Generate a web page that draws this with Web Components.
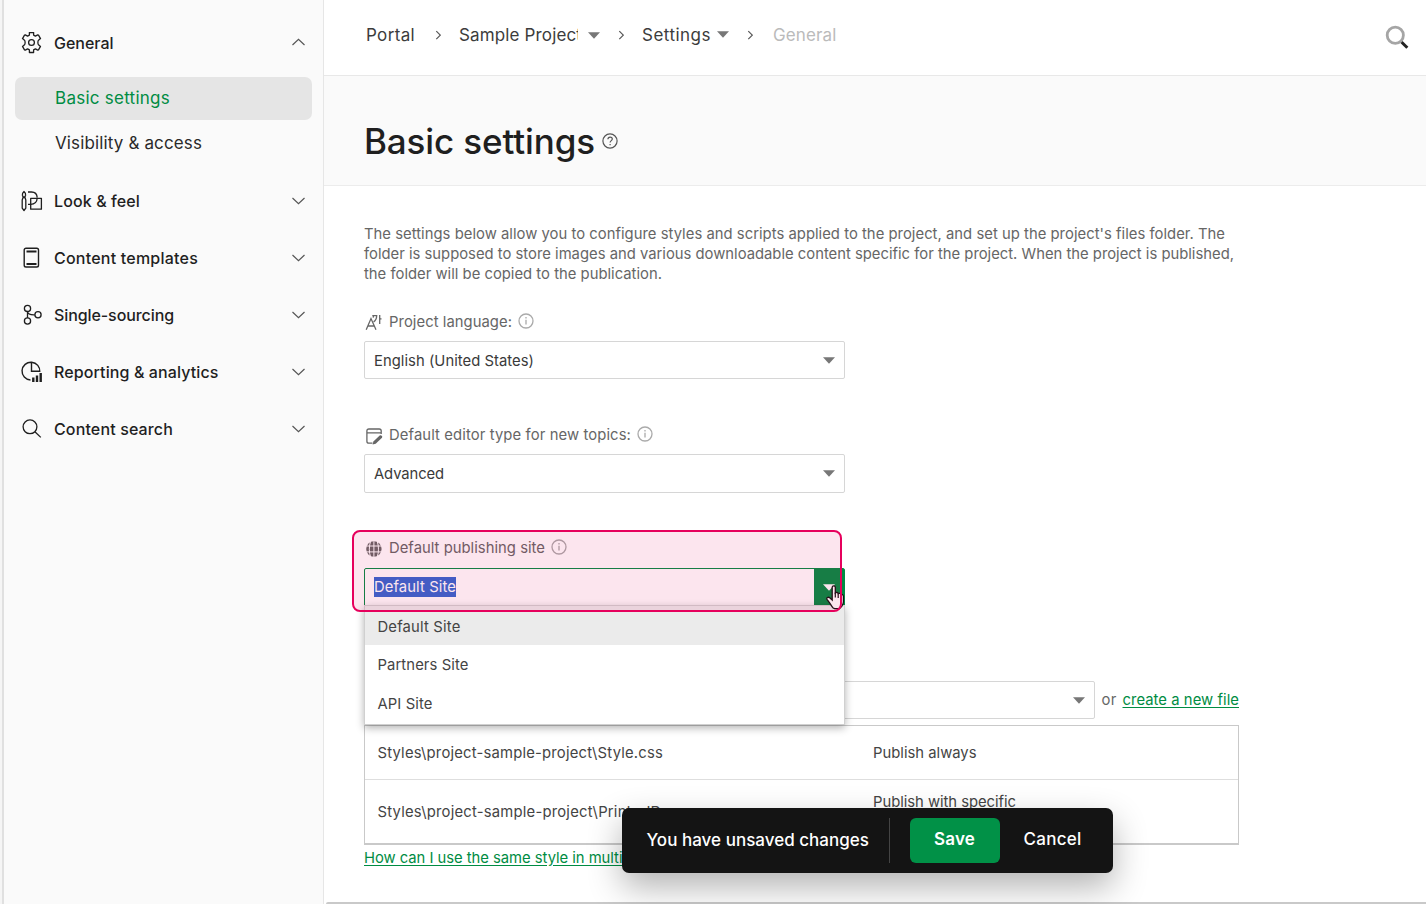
<!DOCTYPE html>
<html lang="en">
<head>
<meta charset="utf-8">
<title>Basic settings</title>
<style>
  body {
    margin: 0;
    background: #fff;
    font-family: Inter, Roboto, "Liberation Sans", sans-serif;
    overflow: hidden;
  }
</style>
</head>
<body>
<settings-page></settings-page>

<script>
// Outline icons, all drawn in currentColor
const ICONS = {
  gear: `<svg width="22" height="22" viewBox="0.5 0.5 22 22" fill="none" stroke="currentColor" stroke-width="1.3" stroke-linejoin="round"><path d="M8.900 1h4.200v2.600l1.800 1 2.300-1.200 .8.200 2 3.500-2 1.700c-.8.600-.8 3.800 0 4.400l2 1.700-2 3.500-.8.200-2.300-1.200-1.800 1V21H8.900v-2.600l-1.800-1-2.300 1.200-.8-.2-2-3.500 2-1.700c.8-.6.8-3.800 0-4.400L2 7.100l2-3.500 .8-.2 2.300 1.200 1.800-1z"/><circle cx="11" cy="11" r="2.900"/></svg>`,
  look: `<svg width="22" height="22" viewBox="0 0 22 22" fill="none" stroke="currentColor" stroke-width="1.3" stroke-linejoin="round"><path d="M3 1.500c1.300 1 1.800 2.300 1.600 3.700L4 6.800H2L1.400 5.200C1.200 3.800 1.700 2.500 3 1.500zM2 7.500h2l.8 2.500v8.200L3 20.500 1.200 18.200V10z"/><path d="M7 2h3.500c3.200 0 5.500 2.300 5.700 5.600M7 14.300h2.600c3.500 0 6.300-2 6.600-6"/><path d="M9.700 8.300h10.700v10.900H9.700z"/></svg>`,
  template: `<svg width="22" height="22" viewBox="0 0 22 22" fill="none" stroke="currentColor"><rect x="3.200" y="1.200" width="14.300" height="18.800" rx="1.800" stroke-width="1.4"/><path d="M5.500 4.500h10M5.500 17h10" stroke-width="2.2"/></svg>`,
  nodes: `<svg width="22" height="22" viewBox="0 0 22 22" fill="none" stroke="currentColor" stroke-width="1.3"><circle cx="6.500" cy="4.400" r="3.100"/><circle cx="6.500" cy="17" r="3.100"/><circle cx="17" cy="10.800" r="3.100"/><path d="M6.500 7.500v6.400M6.500 7.500c.2 2.400 1.800 3.500 7.300 3.300"/></svg>`,
  report: `<svg width="22" height="22" viewBox="0 0 22 22" fill="none" stroke="currentColor"><path d="M9.500 19A8.900 8.900 0 1 1 18.800 11M10.500 1.200v9h8.700" stroke-width="1.4"/><path d="M12.300 21v-4.500M16 21v-6.500M19.700 21V12" stroke-width="2.4"/></svg>`,
  search: `<svg width="22" height="22" viewBox="0 0 22 22" fill="none" stroke="currentColor" stroke-width="1.3"><circle cx="9" cy="8.800" r="6.900"/><path d="M13.900 13.700l5.900 5.700"/></svg>`,
  chevron: `<svg width="14" height="8" viewBox="0 0 14 8" fill="none" stroke="#555" stroke-width="1.2"><path d="M1.500 1l6 5.700 6-5.700"/></svg>`,
  crumb: `<svg width="6" height="10" viewBox="0 0 6 10" fill="none" stroke="#555" stroke-width="1.2"><path d="M1.300 1.200l4 4-4 4"/></svg>`,
  caret: `<svg width="12" height="7" viewBox="0 0 12 7" fill="currentColor"><path d="M0 .3h12L6 6.700z"/></svg>`,
  info: `<svg width="16" height="16" viewBox="0 0 16 16" fill="none" stroke="#aaa" stroke-width="1.3"><circle cx="8" cy="8" r="7"/><path d="M8 6.800v4.700M8 4.100v1.400"/></svg>`,
  help: `<svg width="16" height="16" viewBox="0 0 16 16" fill="none" stroke="#555" stroke-width="1.2"><circle cx="8" cy="8" r="7.100"/><path d="M5.900 6.200c.1-1.400 1-2.100 2.200-2.100 1.300 0 2.200.8 2.200 1.900 0 1.600-2.200 1.700-2.200 3.600M8.100 11v1.300"/></svg>`,
  language: `<svg width="18" height="18" viewBox="0 0 18 18" fill="none" stroke="currentColor" stroke-width="1.3"><path d="M1.200 15.700L6 4.500l5 11.200M2.900 12h6.300M7.300 1.600h4.400c0 3-1 5-3.100 6.300M14.700 1v9M14.700 4.800h1.800M8.500 1.600l-.3 2"/></svg>`,
  editor: `<svg width="18" height="18" viewBox="0 0 18 18" fill="none" stroke="currentColor" stroke-width="1.3"><path d="M7.500 16.200H3.900c-1.300 0-2-.7-2-2V4c0-1.300.7-2 2-2h10.300c1.300 0 2 .7 2 2v3M1.900 5.800h14.300"/><path d="M7.600 17.600l.8-3.200 6.300-5.900c1.200-.9 3.300.9 2.300 2.200l-6.300 6z" fill="currentColor" stroke="none"/></svg>`,
  globe: `<svg width="18" height="18" viewBox="0 0 18 18"><circle cx="8.900" cy="9" r="7.700" fill="currentColor"/><path d="M1 6h16M1 11.900h16M8.900 1.200v16M5.600 1.200c-1.700 5-1.700 11 0 16M12.200 1.200c1.700 5 1.700 11 0 16" fill="none" stroke="#fff" stroke-width="1"/></svg>`,
  hand: `<svg width="20" height="25" viewBox="0 0 20 25"><path d="M7.200 2.200c0-1.900 3.100-1.900 3.100 0v5.700c.9-.8 2.600-.5 2.900.7 1-.6 2.500-.2 2.800.9 1.200-.3 2.400.4 2.400 1.800v5.500c0 1.800-.8 3-1.500 4.200l-1.600 1.900c-1.200 1-5.600 1.100-7.100 0-1.500-1.200-2.300-3.200-3.600-5.100l-2.600-3.500c-.9-1.500 1.200-2.800 2.700-1.500l2.500 2.200z" fill="#fff" stroke="#111" stroke-width="1.3"/><path d="M10.300 7.500v5M13.200 9v4M16 10v3.500" stroke="#111" stroke-width="1.2"/></svg>`,
  magnifier: `<svg width="26" height="26" viewBox="0 0 26 26" fill="none"><path d="M17 17.500l6.300 6.300" stroke="#222" stroke-width="3"/><circle cx="11.300" cy="11.300" r="8.100" stroke="#a5a5a5" stroke-width="2.8"/></svg>`,
};

// Base class: attaches the shadow root and renders once
class BaseElement extends HTMLElement {
  constructor() {
    super();
    this.attachShadow({ mode: 'open' });
  }

  connectedCallback() {
    this.shadowRoot.innerHTML = `<style>${this.styles()}</style>${this.markup()}`;
  }
}

class UiIcon extends BaseElement {
  styles() {
    return `
      :host { display: inline-flex; flex: none; }
      svg { display: block; }
    `;
  }

  markup() {
    return ICONS[this.getAttribute('name')];
  }
}

// A single line of text, tracked so that it fills the given measure
class TextRun extends BaseElement {
  styles() {
    return `
      :host { display: inline-block; white-space: pre; flex: none; }
    `;
  }

  markup() {
    return '<span><slot></slot></span>';
  }

  connectedCallback() {
    super.connectedCallback();
    const measure = parseFloat(this.getAttribute('measure'));
    const span = this.shadowRoot.querySelector('span');
    const natural = span.getBoundingClientRect().width;
    if (!measure || !natural) return;
    this.style.letterSpacing = `${(measure - natural) / this.textContent.length}px`;
    this.style.width = `${measure}px`;
  }
}

class NavGroup extends BaseElement {
  styles() {
    return `
      :host { display: block; }
      .row {
        display: flex;
        align-items: center;
        height: 57px;
        padding: 0 18px 0 17px;
        gap: 11px;
        font-size: 16px;
        font-weight: 500;
        color: #1f1f1f;
      }
      .label { flex: 1; padding-top: 1px; }
      .items { display: flex; flex-direction: column; gap: 2px; padding: 6px 11px 7px; }
      :host(:not([open])) .items { display: none; }
      :host([open]) .chevron { transform: translateY(-1px) scaleY(-1); }
    `;
  }

  markup() {
    return `
      <div class="row">
        <ui-icon name="${this.getAttribute('icon')}"></ui-icon>
        <div class="label"><text-run measure="${this.getAttribute('measure')}">${this.getAttribute('label')}</text-run></div>
        <ui-icon class="chevron" name="chevron"></ui-icon>
      </div>
      <div class="items"><slot></slot></div>
    `;
  }
}

class NavItem extends BaseElement {
  styles() {
    return `
      :host {
        display: flex;
        align-items: center;
        box-sizing: border-box;
        height: 43px;
        padding: 0 0 2px 40px;
        border-radius: 7px;
        font-size: 17px;
        color: #2a2a2a;
      }
      :host([active]) { background: #e5e5e5; color: #008c43; }
    `;
  }

  markup() {
    return '<slot></slot>';
  }
}

class SideNav extends BaseElement {
  styles() {
    return `
      :host {
        display: block;
        box-sizing: border-box;
        width: 324px;
        padding-top: 14px;
        background: #fafafa;
        border-right: 1px solid #e6e6e6;
        border-left: 2px solid #f5f5f5;
        box-shadow: inset 2px 0 #e0e0e0;
        flex: none;
      }
      .groups { padding-left: 2px; }
    `;
  }

  markup() {
    return `
      <div class="groups">
        <nav-group open icon="gear" label="General" measure="59.5">
          <nav-item active><text-run measure="115">Basic settings</text-run></nav-item>
          <nav-item><text-run measure="147">Visibility &amp; access</text-run></nav-item>
        </nav-group>
        <nav-group icon="look" label="Look &amp;amp; feel" measure="86"></nav-group>
        <nav-group icon="template" label="Content templates" measure="144"></nav-group>
        <nav-group icon="nodes" label="Single-sourcing" measure="120"></nav-group>
        <nav-group icon="report" label="Reporting &amp;amp; analytics" measure="164.5"></nav-group>
        <nav-group icon="search" label="Content search" measure="119"></nav-group>
      </div>
    `;
  }
}

class TopBar extends BaseElement {
  styles() {
    return `
      :host {
        display: flex;
        justify-content: space-between;
        box-sizing: border-box;
        height: 76px;
        padding: 0 16px 0 42px;
        border-bottom: 1px solid #e8e8e8;
      }
      .crumbs {
        display: flex;
        align-items: center;
        height: 69px;
        font-size: 17px;
        color: #3c3c3c;
      }
      .crumbs > * { flex: none; }
      .sep { padding: 1px 18px 0 20px; }
      .project { width: 119px; overflow: hidden; }
      .caret { color: #777; margin-left: 6px; }
      .project + .caret { margin-left: 10px; margin-top: 1px; }
      .caret + .sep { padding-left: 18px; }
      .current { color: #bbb; margin-left: 2px; }
      .search { align-self: flex-start; padding-top: 24px; }
    `;
  }

  markup() {
    return `
      <div class="crumbs">
        <text-run measure="49">Portal</text-run>
        <ui-icon class="sep" name="crumb"></ui-icon>
        <div class="project"><text-run measure="123">Sample Project</text-run></div>
        <ui-icon class="caret" name="caret"></ui-icon>
        <ui-icon class="sep" name="crumb"></ui-icon>
        <text-run measure="69">Settings</text-run>
        <ui-icon class="caret" name="caret"></ui-icon>
        <ui-icon class="sep" name="crumb"></ui-icon>
        <text-run class="current" measure="63.5">General</text-run>
      </div>
      <ui-icon class="search" name="magnifier"></ui-icon>
    `;
  }
}

class PageTitle extends BaseElement {
  styles() {
    return `
      :host {
        display: flex;
        align-items: center;
        box-sizing: border-box;
        height: 110px;
        padding: 0 0 0 40px;
        gap: 7px;
        background: #fafafa;
        border-bottom: 1px solid #ececec;
      }
      h1 { margin: 20px 0 0; font-size: 35px; line-height: 44px; font-weight: 500; color: #1f1f1f; }
      ui-icon { margin-top: 20px; }
    `;
  }

  markup() {
    return `
      <h1><text-run measure="231">Basic settings</text-run></h1>
      <ui-icon name="help"></ui-icon>
    `;
  }
}

class FieldLabel extends BaseElement {
  styles() {
    return `
      :host {
        display: flex;
        align-items: center;
        height: 20px;
        gap: 6px;
        padding-left: 1px;
        font-size: 14.8px;
        color: #666;
      }
      .icon { margin-top: 1px; }
      .info { margin-left: -0.5px; margin-top: -2px; }
    `;
  }

  markup() {
    return `
      <ui-icon class="icon" name="${this.getAttribute('icon')}"></ui-icon>
      <slot></slot>
      <ui-icon class="info" name="info"></ui-icon>
    `;
  }
}

class SelectBox extends BaseElement {
  styles() {
    return `
      :host {
        display: flex;
        align-items: stretch;
        box-sizing: border-box;
        width: 481px;
        height: 38px;
        border: 1px solid #d6d6d6;
        border-radius: 2px;
        background: #fff;
        font-size: 14.8px;
        color: #3a3a3a;
      }
      .value { flex: 1; display: flex; align-items: center; padding-left: 9px; padding-top: var(--value-shift, 1px); }
      .button { width: 30px; display: flex; align-items: center; justify-content: center; color: #777; }
      :host([active]) { border-color: #008c43; border-radius: 2px 2px 0 0; }
      :host([active]) .button { background: #008c43; color: #fff; }
    `;
  }

  markup() {
    return `
      <div class="value"><slot></slot></div>
      <div class="button"><ui-icon name="caret"></ui-icon></div>
    `;
  }
}

// Open list that drops over the content under its select
class OptionMenu extends BaseElement {
  styles() {
    return `
      :host {
        position: absolute;
        left: 0;
        top: 37px;
        z-index: 2;
        box-sizing: border-box;
        width: 481px;
        height: 120px;
        border: 1px solid #d0d0d0;
        background: #fff;
        box-shadow: 0 3px 8px rgba(0, 0, 0, .3);
        font-size: 14.8px;
        color: #444;
      }
      .option { display: flex; align-items: center; height: 39px; padding: 3px 0 0 12.5px; box-sizing: border-box; }
      .option.hover { background: #ebebeb; }
      .option.hover + .option { height: 38px; padding-top: 2px; }
    `;
  }

  markup() {
    return `
      <div class="option hover"><text-run measure="83">Default Site</text-run></div>
      <div class="option"><text-run measure="91">Partners Site</text-run></div>
      <div class="option"><text-run measure="55">API Site</text-run></div>
    `;
  }
}

class StyleTable extends BaseElement {
  styles() {
    return `
      :host {
        display: block;
        box-sizing: border-box;
        width: 875px;
        border: 1px solid #c9c9c9;
        border-bottom-width: 2px;
        font-size: 14.8px;
        line-height: 20px;
        color: #444;
      }
      .row { display: grid; grid-template-columns: 495px 1fr; align-items: center; padding-left: 12.5px; height: 53px; }
      .row + .row { border-top: 1px solid #dedede; height: 63px; }
      .mode { padding-left: 0.5px; }
    `;
  }

  markup() {
    return `
      <div class="row">
        <text-run measure="285.5">Styles\\project-sample-project\\Style.css</text-run>
        <div class="mode"><text-run measure="103.5">Publish always</text-run></div>
      </div>
      <div class="row">
        <text-run measure="284">Styles\\project-sample-project\\PrinterID</text-run>
        <div class="mode"><text-run measure="143">Publish with specific</text-run><br>outputs</div>
      </div>
    `;
  }
}

class SaveBar extends BaseElement {
  styles() {
    return `
      :host {
        position: absolute;
        left: 621.5px;
        top: 808px;
        z-index: 5;
        box-sizing: border-box;
        width: 491px;
        height: 65px;
        display: flex;
        align-items: center;
        padding-left: 25px;
        border-radius: 7px;
        background: #141414;
        color: #fff;
        font-size: 17px;
        font-weight: 500;
        box-shadow: 0 14px 34px rgba(0, 0, 0, .3);
      }
      .divider { width: 1px; height: 45px; margin: 0 20px 0 19.5px; background: #444; }
      .save {
        display: flex;
        align-items: center;
        justify-content: center;
        width: 90px;
        height: 45px;
        border-radius: 6px;
        background: #019147;
        font-weight: 600;
        margin-right: 24px;
      }
      .message { padding-bottom: 2px; }
      .save, .cancel { padding-bottom: 4px; box-sizing: border-box; }
    `;
  }

  markup() {
    return `
      <text-run class="message" measure="222.5">You have unsaved changes</text-run>
      <div class="divider"></div>
      <div class="save"><text-run measure="41">Save</text-run></div>
      <text-run class="cancel" measure="58">Cancel</text-run>
    `;
  }
}

class SettingsPage extends BaseElement {
  styles() {
    return `
      :host { position: relative; display: flex; height: 904px; overflow: hidden; }
      main { flex: 1; display: flex; flex-direction: column; min-width: 0; }
      .content { flex: 1; padding: 38px 0 0 40px; font-size: 14.8px; color: #666; }
      .intro { display: flex; flex-direction: column; line-height: 20px; margin-bottom: 28px; }
      field-label { margin-bottom: 9px; }
      .field { margin-bottom: 46px; }
      .field.editor { margin-bottom: 45px; --value-shift: 0px; }
      .field.editor select-box { height: 39px; }
      .field.site { position: relative; margin-bottom: 75px; --value-shift: 0px; }
      .field.site field-label { margin-bottom: 10px; }
      .combo { position: relative; height: 38px; }
      .selected { background: #3367d1; color: #fff; line-height: 20px; margin-top: -1px; }
      .file { display: flex; align-items: center; margin-bottom: 6px; }
      .file select-box { width: 731px; margin-right: 6.5px; }
      .file .link { margin-left: 6px; }
      .link { color: #008c43; text-decoration: underline; text-underline-offset: 2px; }
      .more { margin-top: 3px; line-height: 20px; }
      .edge { height: 2px; margin-left: 2px; background: #c9c9c9; border-top-left-radius: 3px; }
      .callout {
        position: absolute;
        left: -12px;
        top: -8px;
        z-index: 4;
        box-sizing: border-box;
        width: 490px;
        height: 82px;
        border: 2px solid #e6005c;
        border-radius: 8px;
        background: rgba(230, 0, 92, .1);
      }
      .pointer { position: absolute; left: 461px; top: 47px; z-index: 3; }
    `;
  }

  markup() {
    return `
      <side-nav></side-nav>
      <main>
        <top-bar></top-bar>
        <page-title></page-title>
        <div class="content">
          <div class="intro">
            <text-run measure="861">The settings below allow you to configure styles and scripts applied to the project, and set up the project's files folder. The</text-run>
            <text-run measure="870">folder is supposed to store images and various downloadable content specific for the project. When the project is published,</text-run>
            <text-run measure="298">the folder will be copied to the publication.</text-run>
          </div>
          <div class="field">
            <field-label icon="language"><text-run measure="123">Project language:</text-run></field-label>
            <select-box><text-run measure="160">English (United States)</text-run></select-box>
          </div>
          <div class="field editor">
            <field-label icon="editor"><text-run measure="242">Default editor type for new topics:</text-run></field-label>
            <select-box><text-run measure="70">Advanced</text-run></select-box>
          </div>
          <div class="field site">
            <field-label icon="globe"><text-run measure="156">Default publishing site</text-run></field-label>
            <div class="combo">
              <select-box active><text-run class="selected" measure="82">Default Site</text-run></select-box>
              <option-menu></option-menu>
            </div>
            <ui-icon class="pointer" name="hand"></ui-icon>
            <div class="callout"></div>
          </div>
          <div class="file">
            <select-box></select-box>
            <text-run measure="15">or</text-run>
            <text-run class="link" measure="116.5">create a new file</text-run>
          </div>
          <style-table></style-table>
          <div class="more"><text-run class="link" measure="340">How can I use the same style in multiple projects</text-run></div>
        </div>
        <div class="edge"></div>
      </main>
      <save-bar></save-bar>
    `;
  }
}

customElements.define('settings-page', SettingsPage);
customElements.define('side-nav', SideNav);
customElements.define('nav-group', NavGroup);
customElements.define('nav-item', NavItem);
customElements.define('top-bar', TopBar);
customElements.define('page-title', PageTitle);
customElements.define('field-label', FieldLabel);
customElements.define('select-box', SelectBox);
customElements.define('option-menu', OptionMenu);
customElements.define('style-table', StyleTable);
customElements.define('save-bar', SaveBar);
customElements.define('ui-icon', UiIcon);
// Last, since it measures text that must already be laid out
customElements.define('text-run', TextRun);
</script>
</body>
</html>
